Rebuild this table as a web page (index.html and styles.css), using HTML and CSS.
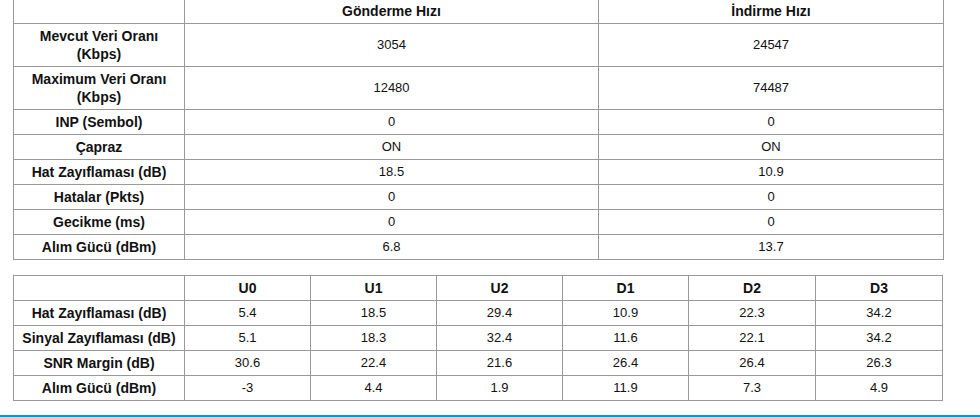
FILE: index.html
```html
<!DOCTYPE html>
<html lang="tr">
<head>
<meta charset="utf-8">
<title>DSL</title>
<link rel="stylesheet" href="styles.css">
</head>
<body>
<div class="page">
  <table class="grid grid-main">
    <colgroup><col class="c-label"><col class="c-up"><col class="c-down"></colgroup>
    <tr><th></th><th>Gönderme Hızı</th><th>İndirme Hızı</th></tr>
    <tr><th>Mevcut Veri Oranı<br>(Kbps)</th><td>3054</td><td>24547</td></tr>
    <tr><th>Maximum Veri Oranı<br>(Kbps)</th><td>12480</td><td>74487</td></tr>
    <tr><th>INP (Sembol)</th><td>0</td><td>0</td></tr>
    <tr><th>Çapraz</th><td>ON</td><td>ON</td></tr>
    <tr><th>Hat Zayıflaması (dB)</th><td>18.5</td><td>10.9</td></tr>
    <tr><th>Hatalar (Pkts)</th><td>0</td><td>0</td></tr>
    <tr><th>Gecikme (ms)</th><td>0</td><td>0</td></tr>
    <tr><th>Alım Gücü (dBm)</th><td>6.8</td><td>13.7</td></tr>
  </table>

  <table class="grid grid-bands">
    <colgroup><col class="c-label"><col class="c-b"><col class="c-b"><col class="c-b"><col class="c-b"><col class="c-b2"><col class="c-b2"></colgroup>
    <tr><th></th><th>U0</th><th>U1</th><th>U2</th><th>D1</th><th>D2</th><th>D3</th></tr>
    <tr><th>Hat Zayıflaması (dB)</th><td>5.4</td><td>18.5</td><td>29.4</td><td>10.9</td><td>22.3</td><td>34.2</td></tr>
    <tr><th>Sinyal Zayıflaması (dB)</th><td>5.1</td><td>18.3</td><td>32.4</td><td>11.6</td><td>22.1</td><td>34.2</td></tr>
    <tr><th>SNR Margin (dB)</th><td>30.6</td><td>22.4</td><td>21.6</td><td>26.4</td><td>26.4</td><td>26.3</td></tr>
    <tr><th>Alım Gücü (dBm)</th><td>-3</td><td>4.4</td><td>1.9</td><td>11.9</td><td>7.3</td><td>4.9</td></tr>
  </table>
</div>
<div class="footer-bar"></div>
</body>
</html>
```

FILE: styles.css
```css
html, body {
  margin: 0;
  padding: 0;
  background: #fff;
}
body {
  font-family: "Liberation Sans", Arial, sans-serif;
  color: #111;
  overflow: hidden;
}
.page {
  padding: 0 0 0 13px;
  margin-top: -2px;
}
.grid {
  border-collapse: collapse;
  table-layout: fixed;
  width: 930px;
}
.grid th, .grid td {
  border: 1px solid #999;
  padding: 3px 2px;
  line-height: 18px;
  text-align: center;
  vertical-align: middle;
}
.grid th {
  font-size: 14px;
  font-weight: bold;
}
.grid td {
  font-size: 13px;
}
.grid-main .c-label { width: 171px; }
.grid-main .c-up { width: 414px; }
.grid-main .c-down { width: 345px; }
.grid-bands {
  margin-top: 15px;
}
.grid-bands .c-label { width: 171px; }
.grid-bands .c-b { width: 126px; }
.grid-bands .c-b2 { width: 127px; }
.footer-bar {
  margin-top: 14px;
  height: 3px;
  background: #0c98cf;
}
```
